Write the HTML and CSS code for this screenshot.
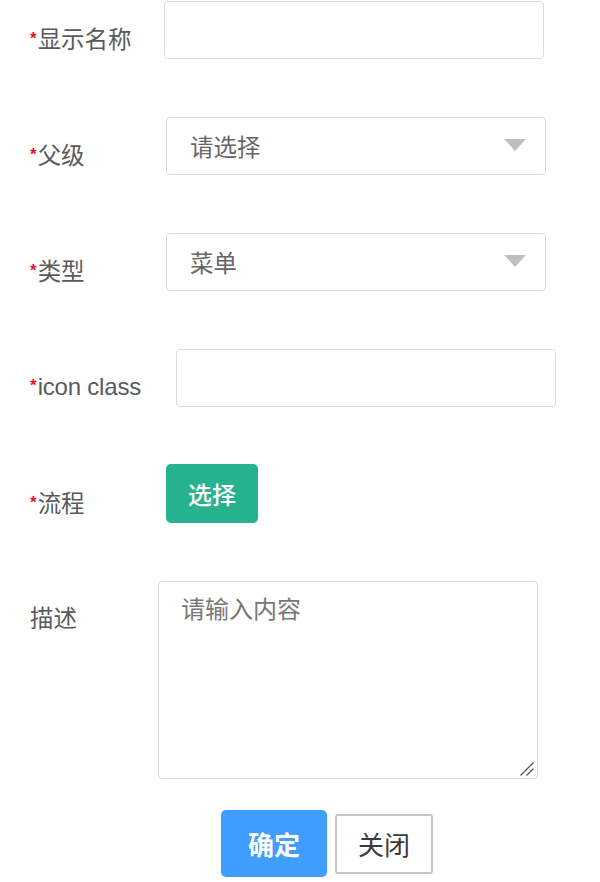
FILE: index.html
```html
<!DOCTYPE html>
<html lang="zh-CN">
<head>
<meta charset="utf-8">
<title>表单</title>
<link rel="stylesheet" href="styles.css">
</head>
<body>
<form class="form">
  <div class="row">
    <label class="label"><span class="req">*</span>显示名称</label>
    <div class="control w380 off6"><input class="input" type="text"></div>
  </div>
  <div class="row">
    <label class="label"><span class="req">*</span>父级</label>
    <div class="control select off8"><span class="select-text">请选择</span><span class="arrow"></span></div>
  </div>
  <div class="row">
    <label class="label"><span class="req">*</span>类型</label>
    <div class="control select off8"><span class="select-text">菜单</span><span class="arrow"></span></div>
  </div>
  <div class="row">
    <label class="label latin"><span class="req">*</span>icon class</label>
    <div class="control w380 off18"><input class="input" type="text"></div>
  </div>
  <div class="row">
    <label class="label"><span class="req">*</span>流程</label>
    <div class="control off8"><button type="button" class="btn btn-green">选择</button></div>
  </div>
  <div class="row row-area">
    <label class="label label-area">描述</label>
    <div class="control w380 area-wrap">
      <textarea class="textarea" placeholder="请输入内容"></textarea>
      <svg class="resizer" width="16" height="16" viewBox="0 0 16 16" aria-hidden="true">
        <line x1="1.5" y1="14.5" x2="14.5" y2="1.5" stroke="#555" stroke-width="1.3"/>
        <line x1="7.5" y1="14.5" x2="14.5" y2="7.5" stroke="#555" stroke-width="1.3"/>
      </svg>
    </div>
  </div>
  <div class="actions">
    <button type="button" class="btn btn-blue">确定</button>
    <button type="button" class="btn btn-plain">关闭</button>
  </div>
</form>
</body>
</html>
```
FILE: styles.css
```css
* { box-sizing: border-box; }
html, body { margin: 0; padding: 0; background: #fff; }
body {
  font-family: "PingFang SC", "Noto Sans CJK SC", sans-serif;
  color: #5f5f5f;
}
.form {
  padding: 1px 0 0 30px;
}
.row {
  display: flex;
  align-items: flex-start;
  margin-bottom: 58px;
}
.label {
  width: 128px;
  flex: none;
  font-size: 23.5px;
  line-height: 30px;
  padding-top: 22px;
  color: #5a5a5a;
  white-space: nowrap;
}
.label.latin {
  font-family: "Liberation Sans", "Noto Sans CJK SC", sans-serif;
  font-size: 24px;
  letter-spacing: -0.2px;
}
.req {
  color: #e8112d;
  font-size: 17px;
  font-weight: 700;
  vertical-align: 4px;
  margin-right: 1px;
  font-family: "Liberation Sans", sans-serif;
  letter-spacing: 0;
}
.control { flex: none; }
.off6 { margin-left: 6px; }
.off8 { margin-left: 8px; }
.off18 { margin-left: 18px; }
.w380 { width: 380px; }
.input {
  display: block;
  width: 100%;
  height: 58px;
  border: 1px solid #dcdcdc;
  border-radius: 4px;
  font-size: 22px;
  padding: 0 22px;
  outline: none;
  background: #fff;
}
.select {
  width: 380px;
  height: 58px;
  border: 1px solid #dcdcdc;
  border-radius: 4px;
  display: flex;
  align-items: center;
  justify-content: space-between;
  padding: 0 19px 0 23px;
}
.select-text {
  font-size: 23.5px;
  color: #666;
  line-height: 30px;
}
.arrow {
  width: 0;
  height: 0;
  border-left: 11px solid transparent;
  border-right: 11px solid transparent;
  border-top: 12px solid #bfbfbf;
  margin-top: -2px;
}
.btn {
  font-family: "PingFang SC", "Noto Sans CJK SC", sans-serif;
  cursor: pointer;
  padding: 0;
}
.btn-green {
  width: 92px;
  height: 59px;
  background: #26b28f;
  color: #fff;
  border: none;
  border-radius: 5px;
  font-size: 24px;
  font-weight: 500;
  margin-top: -1px;
}
.row-area { margin-bottom: 31px; }
.label-area { padding-top: 21px; }
.area-wrap { position: relative; }
.textarea {
  display: block;
  width: 380px;
  height: 198px;
  border: 1px solid #dcdcdc;
  border-radius: 4px;
  font-family: "PingFang SC", "Noto Sans CJK SC", sans-serif;
  font-size: 24px;
  line-height: 30px;
  padding: 11px 22px;
  resize: none;
  outline: none;
  color: #5f5f5f;
}
.textarea::placeholder { color: #777; }
.resizer {
  position: absolute;
  right: 3px;
  bottom: 2px;
}
.actions {
  display: flex;
  align-items: center;
  padding-left: 191px;
  gap: 8px;
}
.btn-blue {
  width: 106px;
  height: 67px;
  background: #409eff;
  color: #fff;
  border: none;
  border-radius: 5px;
  font-size: 26px;
  font-weight: 700;
}
.btn-plain {
  width: 98px;
  height: 60px;
  background: #fff;
  color: #3a3a3a;
  border: 2px solid #c4c4c4;
  border-radius: 3px;
  font-size: 26px;
}
```
